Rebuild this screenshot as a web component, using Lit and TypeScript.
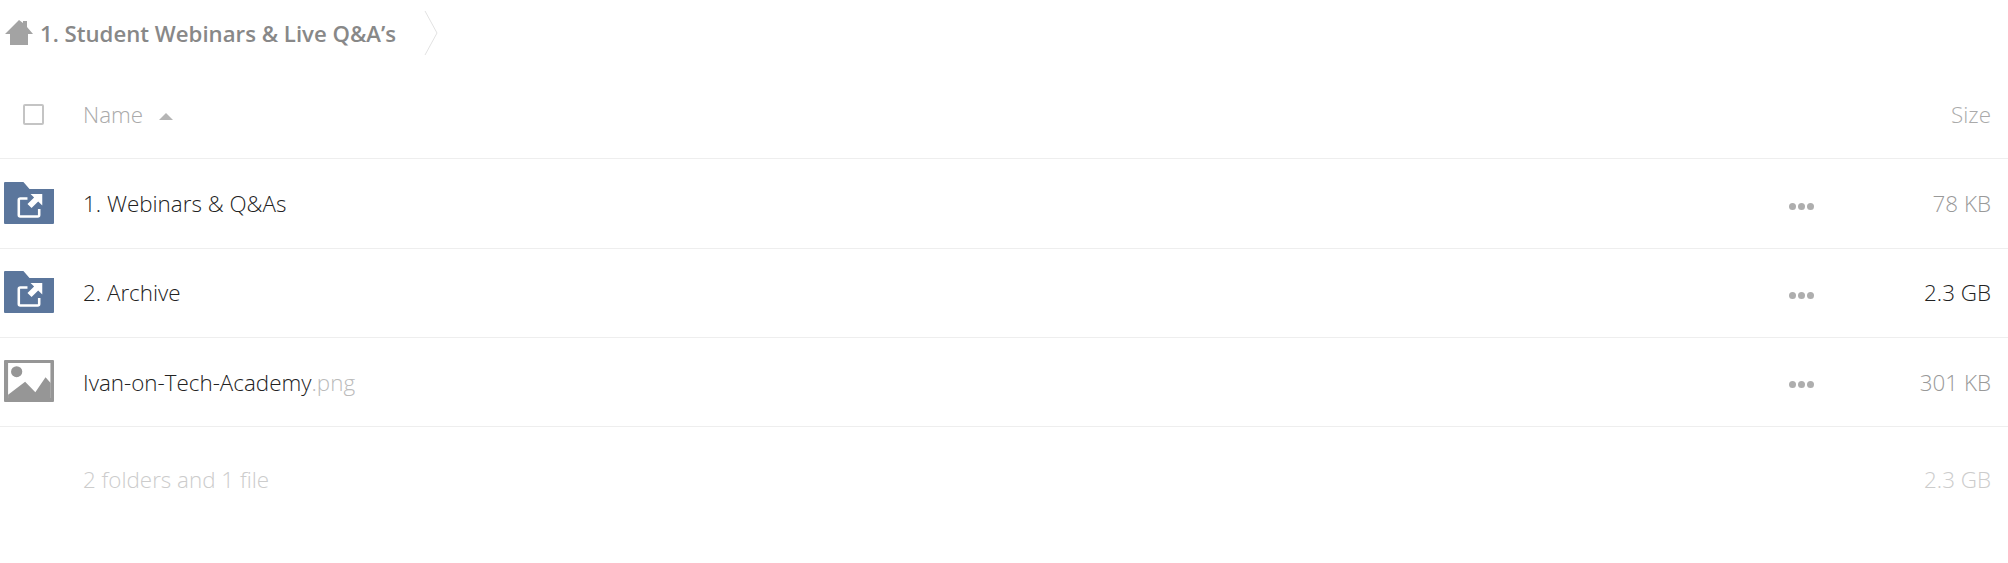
import { LitElement, html, css, svg } from 'lit';
import { customElement } from 'lit/decorators.js';

type Row = { kind: 'folder' | 'image'; name: string; ext?: string; size: string; big?: boolean };

const rows: Row[] = [
  { kind: 'folder', name: '1. Webinars & Q&As', size: '78 KB' },
  { kind: 'folder', name: '2. Archive', size: '2.3 GB', big: true },
  { kind: 'image', name: 'Ivan-on-Tech-Academy', ext: '.png', size: '301 KB' },
];

const folderIcon = svg`
  <path d="M1 0h18l6 7h24v34a1 1 0 0 1-1 1H1a1 1 0 0 1-1-1V1a1 1 0 0 1 1-1z" fill="#5b769c"/>
  <path d="M23 16.500h-7a1.500 1.500 0 0 0-1.500 1.500v15a1.500 1.500 0 0 0 1.500 1.500h17a1.500 1.500 0 0 0 1.500-1.500v-6" fill="none" stroke="#fff" stroke-width="2.500"/>
  <path d="M26 12h11.500v11.500l-4-4-6.500 6.500-4-4 6.500-6.500z" fill="#fff"/>`;

const imageIcon = svg`
  <rect width="49" height="42" rx="1" fill="#969696"/>
  <rect x="4" y="3" width="41.500" height="35" fill="#fff"/>
  <circle cx="12.400" cy="11.700" r="5.500" fill="#969696"/>
  <path d="M4 38v-3.300L20.700 21.700l10 10.600 10-15 5 5.700V38z" fill="#969696"/>`;

@customElement('app-root')
export class AppRoot extends LitElement {
  static styles = css`
    :host {
      display: block;
      width: 2008px;
      height: 563px;
      background: #fff;
      font-family: "Open Sans", sans-serif;
      font-weight: 300;
      font-size: 22.4px;
      color: #222;
      overflow: hidden;
    }
    .crumbs {
      display: flex;
      align-items: center;
      height: 66px;
      padding-left: 5px;
      gap: 7px;
      color: #888;
      font-size: 22.2px;
      font-weight: 600;
    }
    .crumbs .home {
      margin-bottom: 2px;
    }
    .crumbs .chevron {
      margin-left: 21px;
    }
    .row {
      display: flex;
      align-items: center;
      box-sizing: border-box;
      height: 89.33px;
      border-bottom: 1px solid #eee;
    }
    .head {
      height: 93.4px;
      padding-top: 5px;
      color: #aaa;
    }
    .lead {
      width: 83px;
      flex: none;
      display: flex;
      margin-bottom: 2px;
      padding-left: 4px;
      box-sizing: border-box;
    }
    .check {
      width: 17px;
      height: 17px;
      margin: 2px 0 0 19px;
      border: 2px solid #c4c4c4;
      border-radius: 2px;
    }
    .name {
      flex: 1;
    }
    .sort {
      display: inline-block;
      margin-left: 10px;
      vertical-align: 3px;
      border: 7px solid transparent;
      border-top: 0;
      border-bottom-color: #b5b5b5;
    }
    .ext {
      color: #bbb;
    }
    .dots {
      display: flex;
      gap: 2px;
      margin: 5px 57px 0 0;
    }
    .dots i {
      width: 7px;
      height: 7px;
      border-radius: 50%;
      background: #aeaeae;
    }
    .size {
      width: 120px;
      padding-right: 17px;
      text-align: right;
      color: #999;
    }
    .size.big {
      color: #222;
    }
    .head .size {
      color: #aaa;
    }
    .summary {
      display: flex;
      align-items: center;
      height: 104px;
      color: #ccc;
    }
    .summary .name {
      padding-left: 83px;
    }
    .summary .size {
      color: #ccc;
    }
  `;

  render() {
    return html`
      <div class="crumbs">
        <svg class="home" width="28" height="25" viewBox="0 0 28 25">
          <path d="M14 0l4 3V1h4v6l6 7h-5v11H5V14H0z" fill="#a3a3a3"/>
        </svg>
        <span>1. Student Webinars &amp; Live Q&amp;A’s</span>
        <svg class="chevron" width="14" height="44" viewBox="0 0 14 44">
          <path d="M1 0l12 22L1 44" fill="none" stroke="#e2e2e2"/>
        </svg>
      </div>
      <div class="row head">
        <div class="lead"><div class="check"></div></div>
        <div class="name">Name <span class="sort"></span></div>
        <div class="size">Size</div>
      </div>
      ${rows.map(r => html`
        <div class="row">
          <div class="lead">
            <svg width="50" height="42" viewBox="0 0 49 42" preserveAspectRatio="none">${r.kind === 'folder' ? folderIcon : imageIcon}</svg>
          </div>
          <div class="name">${r.name}<span class="ext">${r.ext ?? ''}</span></div>
          <div class="dots"><i></i><i></i><i></i></div>
          <div class="size ${r.big ? 'big' : ''}">${r.size}</div>
        </div>
      `)}
      <div class="summary">
        <div class="name">2 folders and 1 file</div>
        <div class="size">2.3 GB</div>
      </div>
    `;
  }
}
